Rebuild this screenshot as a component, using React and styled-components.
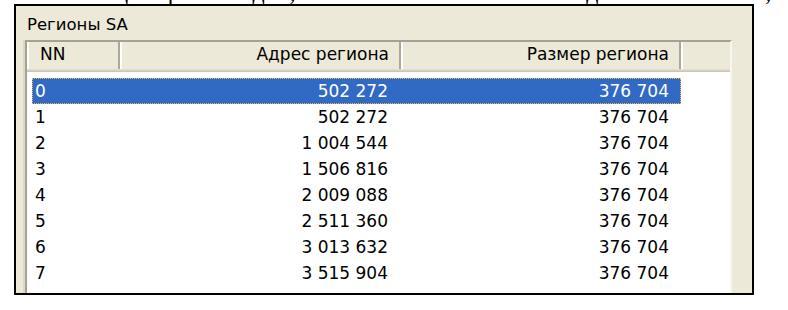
import React from 'react';
import styled, { createGlobalStyle } from 'styled-components';

const GlobalStyle = createGlobalStyle`
    html, body {
        margin: 0;
        padding: 0;
        background: #ffffff;
    }
`;

const Page = styled.div`
    width: 788px;
    height: 310px;
    overflow: hidden;
    background: #ffffff;
`;

// the bottom of a line of document text, cut off by the screenshot
const CutLine = styled.div`
    height: 4px;
    overflow: hidden;
    white-space: nowrap;
    font-family: 'Liberation Serif', serif;
    font-size: 24px;
    line-height: 24px;
    color: #000;

    & span {
        display: block;
        margin-top: -20px;
        padding-left: 40px;
    }
`;

const Window = styled.div`
    box-sizing: border-box;
    margin-left: 14px;
    width: 740px;
    height: 291px;
    border: 2px solid #000;
    background: #ece9d8;
    padding: 9px 0 0 9px;
    overflow: hidden;
    font-family: 'DejaVu Sans', sans-serif;
`;

const GroupTitle = styled.div`
    font-size: 16.5px;
    line-height: 19px;
    color: #000;
    padding-left: 2px;
    margin-bottom: 6px;
`;

const ListView = styled.div`
    box-sizing: border-box;
    width: 707px;
    height: 270px;
    background: #ffffff;
    border-style: solid;
    border-width: 2px 2px 0 2px;
    border-color: #a5a293 #f7f6f0 #f7f6f0 #a5a293;
    box-shadow: -2px 0 0 #dcd8c8;
`;

const Header = styled.div`
    display: grid;
    grid-template-columns: 93px 281px 280px 1fr;
    height: 30px;
    background: #ece9d8;
    box-shadow: inset 0 -1px 0 #cbc7b8, inset 0 -2px 0 #d6d2c2, inset 0 -3px 0 #e2decd;
`;

const HeaderCell = styled.div`
    display: flex;
    align-items: center;
    justify-content: ${p => (p.$right ? 'flex-end' : 'flex-start')};
    box-sizing: border-box;
    padding: 0 ${p => (p.$right ? '10px' : '0')} 3px ${p => (p.$right ? '0' : '11px')};
    border-left: 2px solid #ffffff;
    border-right: ${p => (p.$last ? 'none' : '2px solid #aca899')};
    margin-bottom: 3px;
    font-size: 17px;
    color: #000;
    white-space: nowrap;
`;

const Rows = styled.div`
    padding: 6px 0 0 5px;
`;

const Row = styled.div`
    display: grid;
    grid-template-columns: 87px 281px 281px;
    width: 649px;
    height: 26px;
    box-sizing: border-box;
    align-items: center;
    font-size: 17px;
    color: ${p => (p.$selected ? '#ffffff' : '#000000')};
    background: ${p => (p.$selected ? '#316ac5' : 'transparent')};
    outline: ${p => (p.$selected ? '1px dotted #f3b54a' : 'none')};
    outline-offset: -1px;
`;

const Cell = styled.div`
    text-align: ${p => (p.$right ? 'right' : 'left')};
    padding: ${p => (p.$right ? '0 12px 0 0' : '0 0 0 3px')};
    white-space: nowrap;
`;

const regions = [
    ['0', '502 272', '376 704'],
    ['1', '502 272', '376 704'],
    ['2', '1 004 544', '376 704'],
    ['3', '1 506 816', '376 704'],
    ['4', '2 009 088', '376 704'],
    ['5', '2 511 360', '376 704'],
    ['6', '3 013 632', '376 704'],
    ['7', '3 515 904', '376 704'],
];

export default function App() {
    return (
        <Page>
            <GlobalStyle />
            <CutLine>
                <span>в таблице хорошо видно, что все области SA имеют одинаковый объём, а начала их смещены на этот же объём</span>
            </CutLine>
            <Window>
                <GroupTitle>Регионы SA</GroupTitle>
                <ListView>
                    <Header>
                        <HeaderCell>NN</HeaderCell>
                        <HeaderCell $right>Адрес региона</HeaderCell>
                        <HeaderCell $right>Размер региона</HeaderCell>
                        <HeaderCell $last />
                    </Header>
                    <Rows>
                        {regions.map(([nn, addr, size], i) => (
                            <Row key={nn} $selected={i === 0}>
                                <Cell>{nn}</Cell>
                                <Cell $right>{addr}</Cell>
                                <Cell $right>{size}</Cell>
                            </Row>
                        ))}
                    </Rows>
                </ListView>
            </Window>
        </Page>
    );
}
